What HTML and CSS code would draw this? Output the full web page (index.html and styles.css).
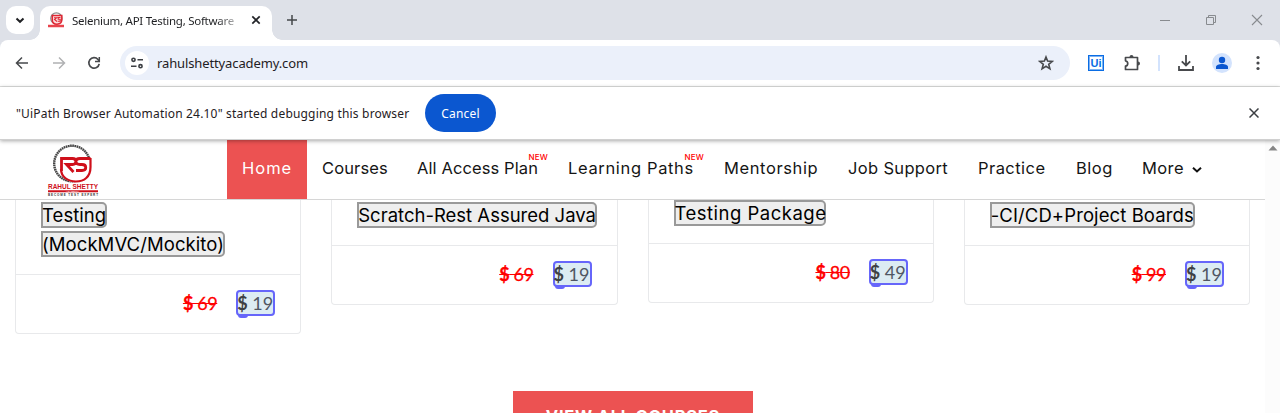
FILE: index.html
```html
<!DOCTYPE html>
<html lang="en">
<head>
<meta charset="utf-8">
<title>Rahul Shetty Academy</title>
<link rel="stylesheet" href="styles.css">
</head>
<body>
<div class="browser">
  <header class="tabstrip">
    <button class="tab-search" aria-label="Search tabs"><svg width="28" height="28" viewBox="0 0 28 28"><path d="M10.5 12.5l3.5 3.3 3.5-3.3" fill="none" stroke="#1f2023" stroke-width="2"/></svg></button>
    <div class="tab">
      <svg class="favicon" width="16" height="16" viewBox="0 0 16 16"><circle cx="8.4" cy="6.4" r="5.6" fill="none" stroke="#8b8b8b" stroke-width="1.3"/><path d="M4.3 3.6h9.5v4c0 3-2 4.600-4.800 4.600S4.300 10.500 4.300 8z" fill="#fbdede" stroke="#e02733" stroke-width="1.5"/><path d="M6 5.800h2.500L6.500 7.500l2.500 2M12.500 5.500h-2.300v1.800h2v2h-2.500" fill="none" stroke="#e02733" stroke-width="1.100"/><path d="M0 14h16" stroke="#e8444c" stroke-width="2.500"/></svg>
      <span class="tab-title">Selenium, API Testing, Software</span>
      <svg class="tab-close" width="10" height="10" viewBox="0 0 10 10"><path d="M1.300 1.300l7.400 7.400M8.700 1.300L1.300 8.700" stroke="#222428" stroke-width="1.700"/></svg>
    </div>
    <svg class="new-tab" width="12" height="12" viewBox="0 0 12 12"><path d="M6 1v10M1 6h10" stroke="#44474a" stroke-width="1.500"/></svg>
    <div class="window-buttons">
      <svg width="12" height="12" viewBox="0 0 12 12"><path d="M1 6.500h10" stroke="#888b8f"/></svg>
      <svg width="12" height="12" viewBox="0 0 12 12"><path d="M1.500 3.500h7v7h-7zM3.500 3.500v-2h7v7h-2" fill="none" stroke="#888b8f"/></svg>
      <svg width="12" height="12" viewBox="0 0 12 12"><path d="M1 1l10 10M11 1L1 11" stroke="#888b8f" stroke-width="1.100"/></svg>
    </div>
  </header>

  <div class="toolbar">
    <svg class="back" width="14" height="14" viewBox="0 0 14 14"><path d="M13 7H2M7 1.500L1.500 7 7 12.500" fill="none" stroke="#47494c" stroke-width="1.500"/></svg>
    <svg class="forward" width="14" height="14" viewBox="0 0 14 14"><path d="M1 7h11M7 1.500L12.500 7 7 12.500" fill="none" stroke="#b0b1b3" stroke-width="1.500"/></svg>
    <svg class="reload" width="14" height="14" viewBox="0 0 14 14"><path d="M12.200 7.800A5.200 5.200 0 1 1 11 3.500L12 4.700" fill="none" stroke="#47494c" stroke-width="1.700"/><path d="M12.300 1v4.400H8" fill="none" stroke="#47494c" stroke-width="1.500"/></svg>
    <div class="omnibox">
      <span class="site-info"><svg width="14" height="12" viewBox="0 0 14 12"><g fill="none" stroke="#3c3f43" stroke-width="1.600"><circle cx="3.500" cy="2.800" r="1.600"/><path d="M7.500 2.800H13M1 9.200h5.500"/><circle cx="10.500" cy="9.200" r="1.600"/></g></svg></span>
      <span class="url">rahulshettyacademy.com</span>
      <svg class="star" width="16" height="16" viewBox="0 0 16 16"><path d="M8 2l1.600 4.100 4.700.3-3.600 2.900 1.200 4.500L8 11.300l-3.900 2.500 1.200-4.500-3.600-2.900 4.700-.3z" fill="none" stroke="#47494c" stroke-width="1.600"/></svg>
    </div>
    <span class="uipath">Ui</span>
    <svg class="puzzle" width="18" height="18" viewBox="0 0 18 18"><path d="M2.500 3.500h12v12h-12v-3.300c3-.5 3-4.900 0-5.400z" fill="none" stroke="#47494c" stroke-width="1.700" stroke-linejoin="round"/><path d="M6.500 3a2 2 0 0 1 4 0zM15 7.500a2 2 0 0 1 0 4z" fill="#47494c"/></svg>
    <span class="divider"></span>
    <svg class="download" width="16" height="16" viewBox="0 0 16 16"><path d="M8 0v10M3.800 6.300L8 10.500l4.200-4.200M1 11v4h14v-4" fill="none" stroke="#47494c" stroke-width="1.800"/></svg>
    <svg class="profile" width="20" height="20" viewBox="0 0 20 20"><circle cx="10" cy="10" r="10" fill="#d3e3fd"/><circle cx="10" cy="7" r="3.200" fill="#0b57d0"/><path d="M4 16v-2c0-2 3-3 6-3s6 1 6 3v2z" fill="#0b57d0"/></svg>
    <svg class="menu" width="4" height="16" viewBox="0 0 4 16" fill="#47494c"><circle cx="2" cy="2.500" r="1.600"/><circle cx="2" cy="8" r="1.600"/><circle cx="2" cy="13.500" r="1.600"/></svg>
  </div>

  <div class="infobar">
    <span class="info-text">"UiPath Browser Automation 24.10" started debugging this browser</span>
    <button class="cancel">Cancel</button>
    <svg class="info-close" width="10" height="10" viewBox="0 0 10 10"><path d="M.5.5l9 9M9.500.5l-9 9" stroke="#3c3f43" stroke-width="1.500"/></svg>
  </div>

  <div class="viewport">
    <main class="page">
      <nav class="nav">
        <svg class="logo" width="52" height="52" viewBox="0 0 52 52">
          <circle cx="25" cy="19.500" r="17.800" fill="none" stroke="#444" stroke-width="2.400" stroke-dasharray="1.700 .5"/>
          <path d="M14 14h30v10c0 9-7 14.500-15 14.500S14 33 14 24z" fill="#fff"/>
          <path d="M14.500 27V14.500h11c4.500 0 4.500 6 0 6h-6l7 7.500M43.500 14.500H33c-5.500 0-5.500 6 0 6h2c5 0 5 6 0 6h-6" fill="none" stroke="#cf101b" stroke-width="2.800"/>
          <path d="M43.500 14v9c0 10-6.500 14.500-14.500 14.500S14 33 14 25" fill="none" stroke="#cf101b" stroke-width="2.200"/>
          <text x="1" y="45" class="logo-name" textLength="50" lengthAdjust="spacingAndGlyphs">RAHUL SHETTY</text>
          <path d="M1 47.300h50" stroke="#cf101b" stroke-width="2"/>
          <text x="19" y="48.300" class="logo-academy" textLength="13">ACADEMY</text>
          <text x="1" y="51.700" class="logo-tag" textLength="50">BECOME TEST EXPERT</text>
        </svg>
        <a class="item home"><span>Home</span></a>
        <a class="item courses"><span>Courses</span></a>
        <a class="item plan"><span>All Access Plan</span><sup>NEW</sup></a>
        <a class="item paths"><span>Learning Paths</span><sup>NEW</sup></a>
        <a class="item mentor"><span>Mentorship</span></a>
        <a class="item job"><span>Job Support</span></a>
        <a class="item practice"><span>Practice</span></a>
        <a class="item blog"><span>Blog</span></a>
        <a class="item more"><span>More</span><svg width="10" height="8" viewBox="0 0 10 8"><path d="M1 1.800l4 3.700 4-3.700" fill="none" stroke="#111" stroke-width="2"/></svg></a>
      </nav>
      <section class="cards">
        <article class="card">
          <h3 class="t1"><span class="mark w1">Testing</span><span class="mark w2">(MockMVC/Mockito)</span></h3>
          <div class="prices"><s><b>$</b> 69</s><span class="price"><b>$</b> 19</span></div>
        </article>
        <article class="card">
          <h3><span class="mark w3">Scratch-Rest Assured Java</span></h3>
          <div class="prices"><s><b>$</b> 69</s><span class="price"><b>$</b> 19</span></div>
        </article>
        <article class="card raised">
          <h3><span class="mark w4">Testing Package</span></h3>
          <div class="prices"><s><b>$</b> 80</s><span class="price"><b>$</b> 49</span></div>
        </article>
        <article class="card">
          <h3><span class="mark w5">-CI/CD+Project Boards</span></h3>
          <div class="prices"><s><b>$</b> 99</s><span class="price"><b>$</b> 19</span></div>
        </article>
      </section>
      <a class="view-all">VIEW ALL COURSES</a>
    </main>
    <aside class="scrollbar"><svg width="10" height="6" viewBox="0 0 10 6"><path d="M.5 5.500L5 .5l4.500 5z" fill="#858585"/></svg></aside>
  </div>
</div>
</body>
</html>
```
FILE: styles.css
```css
* { box-sizing: border-box; }
body { margin: 0; background: #fff; font-family: "Noto Sans", sans-serif; }
button { border: 0; padding: 0; font-family: inherit; }
svg { display: block; flex: none; }
.browser { height: 413px; overflow: hidden; display: flex; flex-direction: column; background: #fff; }

/* Tab strip */
.tabstrip { height: 40px; flex: none; background: #dee1e8; display: flex; align-items: center; padding-left: 6px; }
.tab-search { width: 28px; height: 28px; border-radius: 10px; background: #fff; }
.tab { position: relative; width: 232px; height: 34px; margin: 6px 0 0 6px; background: #fff; border-radius: 10px 10px 0 0; display: flex; align-items: center; padding: 0 11px 6px 8px; }
.tab::before, .tab::after { content: ""; position: absolute; bottom: 0; width: 10px; height: 10px; }
.tab::before { left: -10px; background: radial-gradient(circle at 0 0, transparent 9.500px, #fff 10px); }
.tab::after { right: -10px; background: radial-gradient(circle at 100% 0, transparent 9.500px, #fff 10px); }
.tab-title { width: 170px; margin-left: 8px; font-size: 11.500px; letter-spacing: -.27px; white-space: nowrap; overflow: hidden; color: #1f2023; -webkit-mask-image: linear-gradient(90deg, #000 145px, transparent 172px); mask-image: linear-gradient(90deg, #000 145px, transparent 172px); }
.tab-close { margin-left: auto; }
.new-tab { margin-left: 14px; }
.window-buttons { margin-left: auto; display: flex; gap: 34px; padding-right: 17px; }

/* Address row */
.toolbar { height: 47px; flex: none; display: flex; align-items: center; background: #fff; border-bottom: 1px solid #dfe0df; border-radius: 8px 8px 0 0; padding: 0 20px 0 15px; box-shadow: 0 -8px 0 #dee1e8; position: relative; z-index: 0; }
.tabstrip { position: relative; z-index: 1; }
.forward { margin-left: 23px; }
.reload { margin-left: 21px; }
.omnibox { width: 950px; height: 34px; margin-left: 19px; background: #ebf0fa; border-radius: 17px; display: flex; align-items: center; padding: 0 16px 0 5px; }
.site-info { width: 24px; height: 24px; border-radius: 12px; background: #fff; display: flex; align-items: center; justify-content: center; }
.url { margin-left: 8px; font-size: 13px; color: #1f2023; letter-spacing: -.12px; }
.star { margin-left: auto; }
.uipath { width: 16px; height: 16px; margin-left: 18px; border: 1px solid #0a6de4; box-shadow: inset 0 0 0 1px #7eb1f2; font: bold 11px/14px "Liberation Sans", sans-serif; color: #0a6de4; text-align: center; }
.puzzle { margin-left: 19px; }
.divider { width: 2px; height: 16px; margin-left: 17px; background: #d3e3fd; }
.download { margin-left: 18px; }
.profile { margin-left: 18px; }
.menu { margin-left: auto; }

/* Debugging notice */
.infobar { position: relative; z-index: 3; height: 53px; flex: none; display: flex; align-items: center; padding: 0 21px 0 16px; background: #fff; border-bottom: 1px solid #d0d0d0; box-shadow: 0 1px 4px rgba(0,0,0,.35); }
.info-text { width: 393px; font-size: 12px; letter-spacing: .185px; white-space: nowrap; color: #1f2023; }
.cancel { width: 71px; height: 38px; margin-left: 16px; border-radius: 19px; background: #0b57d0; color: #fff; font-size: 12px; letter-spacing: .2px; }
.info-close { margin-left: auto; }

/* Web page */
.viewport { flex: 1; display: flex; min-height: 0; }
.page { width: 1265px; overflow: hidden; }
.scrollbar { width: 15px; background: #fcfcfc; padding: 5px 0 0 3px; }
.nav { height: 60px; border-bottom: 1px solid #d6d6d6; display: flex; padding-left: 47px; font: 400 16.500px/57px Inter, sans-serif; color: #151515; }
.logo { margin: 4px 128px 0 0; }
.logo-name { font: bold 6.500px "Liberation Sans", sans-serif; fill: #cf101b; }
.logo-academy { font: 2.500px "Liberation Sans", sans-serif; fill: #fff; }
.logo-tag { font: bold 3px "Liberation Sans", sans-serif; fill: #333; }
.item { position: relative; height: 59px; padding-left: 15px; white-space: nowrap; }
.home { width: 80px; background: #ec5252; color: #fff; letter-spacing: 1px; }
.courses { width: 95px; letter-spacing: .13px; }
.plan { width: 151px; letter-spacing: .1px; }
.paths { width: 156px; letter-spacing: .65px; }
.mentor { width: 124px; letter-spacing: .6px; }
.job { width: 130px; letter-spacing: .33px; }
.practice { width: 98px; letter-spacing: .45px; }
.blog { width: 66px; letter-spacing: .5px; }
.more { width: 91px; display: flex; gap: 8px; letter-spacing: .4px; }
.more svg { margin-top: 26px; }
.item sup { position: absolute; top: 12px; right: 5px; font: 500 8px/10px Inter, sans-serif; letter-spacing: .2px; color: #f00; }

.cards { height: 191px; display: flex; align-items: flex-start; gap: 30px; padding: 0 15px; }
.card { width: 286.250px; border: 1px solid #e8e9eb; border-top: 0; border-radius: 0 0 4px 4px; }
.card h3 { height: 45px; margin: 0; padding: 2px 0 0 25px; display: flex; flex-direction: column; gap: 3px; font: 400 18.500px/22px Inter, sans-serif; }
.card h3.t1 { height: 74px; }
.raised h3 { height: 43px; padding-top: 0; }
.mark { height: 26px; background: #eee; border: 2px solid #999; border-radius: 0 5px 5px 0; text-indent: -1px; white-space: nowrap; color: #000; }
.w1 { width: 66px; letter-spacing: .05px; }
.w2 { width: 184px; letter-spacing: .07px; }
.w3 { width: 240px; }
.w4 { width: 152px; letter-spacing: .5px; }
.w5 { width: 205px; letter-spacing: .1px; }
.prices { height: 59px; border-top: 1px solid #e8e9eb; display: flex; align-items: center; justify-content: flex-end; gap: 19px; padding: 0 25px 3px 0; font: 18px/22px Lato, sans-serif; }
.prices s { color: #f00; letter-spacing: -.4px; -webkit-text-stroke: .3px #f00; }
.price { position: relative; width: 39px; height: 26px; border: 2px solid #6666fa; border-radius: 4px; background: #dcecf3; color: #505763; white-space: nowrap; text-indent: -1px; }
.price b { color: #3e4143; }
.price::after { content: ""; position: absolute; left: 0; bottom: -4px; width: 10px; height: 3px; background: #6666fa; border-radius: 0 0 3px 3px; }
.view-all { display: block; width: 240px; height: 56px; margin-left: 513px; background: #ec5252; color: #fff; text-align: center; font: 700 16.500px/51px Inter, sans-serif; letter-spacing: .75px; }
```
